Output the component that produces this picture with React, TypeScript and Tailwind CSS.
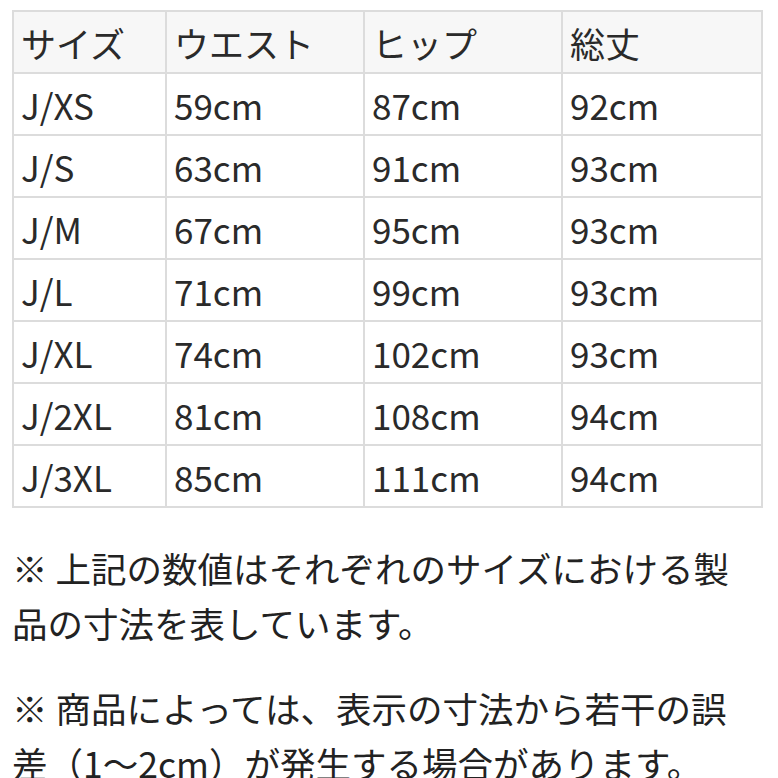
import React from 'react';

const rows = [
  ['J/XS', '59cm', '87cm', '92cm'],
  ['J/S', '63cm', '91cm', '93cm'],
  ['J/M', '67cm', '95cm', '93cm'],
  ['J/L', '71cm', '99cm', '93cm'],
  ['J/XL', '74cm', '102cm', '93cm'],
  ['J/2XL', '81cm', '108cm', '94cm'],
  ['J/3XL', '85cm', '111cm', '94cm'],
];

export default function App() {
  return (
    <div
      className="w-[778px] h-[778px] bg-white overflow-hidden text-[#2a2a2a]"
      style={{ fontFamily: '"Noto Sans CJK JP", "Noto Sans", sans-serif' }}
    >
      <div className="pt-[10px] pl-[12px]">
        <table className="table-fixed border-collapse w-[749px] text-[35px] leading-none">
          <colgroup>
            <col className="w-[153px]" />
            <col className="w-[198px]" />
            <col className="w-[198px]" />
            <col className="w-[200px]" />
          </colgroup>
          <thead>
            <tr className="h-[62px] bg-[#f7f7f7]">
              {['サイズ', 'ウエスト', 'ヒップ', '総丈'].map((h) => (
                <th key={h} className="border-2 border-[#dcdcdc] px-[7px] text-left font-normal">
                  {h}
                </th>
              ))}
            </tr>
          </thead>
          <tbody>
            {rows.map((r) => (
              <tr key={r[0]} className="h-[62px]">
                {r.map((c, i) => (
                  <td key={i} className="border-2 border-[#dcdcdc] px-[7px]">
                    {c}
                  </td>
                ))}
              </tr>
            ))}
          </tbody>
        </table>
      </div>

      <div className="pl-[12px] mt-[32px] text-[35.5px] leading-[55px] whitespace-nowrap text-[#222]">
        <p>
          ※ 上記の数値はそれぞれのサイズにおける製
          <br />
          品の寸法を表しています。
        </p>
        <p className="mt-[30px]">
          ※ 商品によっては、表示の寸法から若干の誤
          <br />
          差（1〜2cm）が発生する場合があります。
        </p>
      </div>
    </div>
  );
}
